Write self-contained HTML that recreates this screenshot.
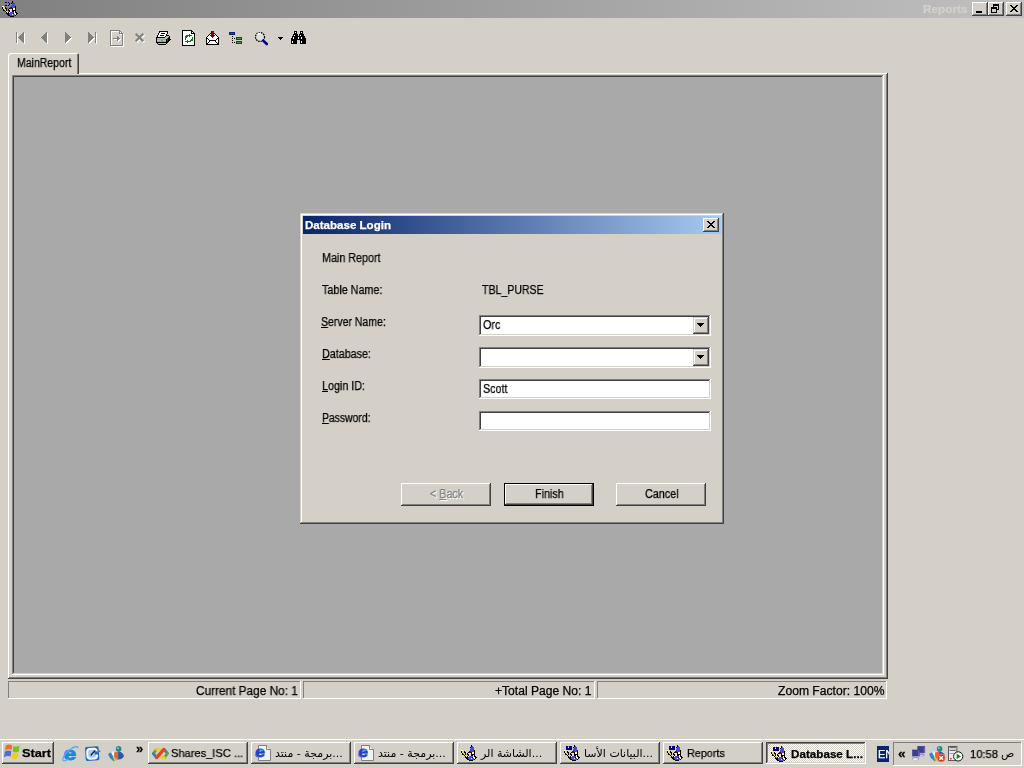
<!DOCTYPE html>
<html lang="en"><head><meta charset="utf-8"><title>Reports</title>
<style>
html,body{margin:0;padding:0}
body{width:1024px;height:768px;overflow:hidden;background:#d4d0c8;position:relative;font-family:"Liberation Sans","DejaVu Sans",sans-serif;font-size:11px;color:#000}
div,span,svg{position:absolute;box-sizing:border-box}
.t{white-space:nowrap;transform-origin:0 50%;display:block;will-change:transform;-webkit-text-stroke:0.25px}
.t u{text-decoration:underline;text-underline-offset:1px}
.ic{overflow:visible}
.btn{background:#d4d0c8;box-shadow:inset -1px -1px 0 #404040,inset 1px 1px 0 #fff,inset -2px -2px 0 #808080}
.sunk{background:#fff;box-shadow:inset -1px -1px 0 #fff,inset 1px 1px 0 #808080,inset -2px -2px 0 #d4d0c8,inset 2px 2px 0 #404040}
.pane{box-shadow:inset -1px -1px 0 #fff,inset 1px 1px 0 #808080}
.tb{background:#d4d0c8;box-shadow:inset -1px -1px 0 #404040,inset 1px 1px 0 #fff,inset -2px -2px 0 #808080}
</style></head><body>
<div style="left:0;top:0;width:1024px;height:18px;background:linear-gradient(to right,#808080,#c0c0c0)"></div><svg class="ic" style="left:2px;top:1px" width="16" height="16" viewBox="0 0 16 16" shape-rendering="crispEdges"><rect x="10" y="0" width="1" height="1" fill="#000000"/><rect x="3" y="1" width="2" height="1" fill="#000080"/><rect x="6" y="1" width="1" height="1" fill="#000080"/><rect x="10" y="1" width="1" height="1" fill="#000000"/><rect x="11" y="1" width="1" height="1" fill="#4848e0"/><rect x="7" y="2" width="1" height="1" fill="#000080"/><rect x="9" y="2" width="1" height="1" fill="#000000"/><rect x="10" y="2" width="3" height="1" fill="#4848e0"/><rect x="7" y="3" width="1" height="1" fill="#000080"/><rect x="9" y="3" width="1" height="1" fill="#8c8cf0"/><rect x="10" y="3" width="3" height="1" fill="#4848e0"/><rect x="3" y="4" width="2" height="1" fill="#000080"/><rect x="6" y="4" width="1" height="1" fill="#000080"/><rect x="9" y="4" width="4" height="1" fill="#4848e0"/><rect x="0" y="5" width="2" height="1" fill="#ffffa0"/><rect x="9" y="5" width="4" height="1" fill="#4848e0"/><rect x="13" y="5" width="1" height="1" fill="#000000"/><rect x="0" y="6" width="1" height="1" fill="#000000"/><rect x="1" y="6" width="2" height="1" fill="#e6e04a"/><rect x="3" y="6" width="1" height="1" fill="#000000"/><rect x="8" y="6" width="2" height="1" fill="#501010"/><rect x="10" y="6" width="3" height="1" fill="#4848e0"/><rect x="13" y="6" width="1" height="1" fill="#000000"/><rect x="0" y="7" width="1" height="1" fill="#000000"/><rect x="1" y="7" width="2" height="1" fill="#e6e04a"/><rect x="3" y="7" width="2" height="1" fill="#000000"/><rect x="7" y="7" width="1" height="1" fill="#000000"/><rect x="8" y="7" width="2" height="1" fill="#501010"/><rect x="10" y="7" width="1" height="1" fill="#000000"/><rect x="11" y="7" width="2" height="1" fill="#ffffa0"/><rect x="13" y="7" width="1" height="1" fill="#000000"/><rect x="1" y="8" width="1" height="1" fill="#000000"/><rect x="2" y="8" width="2" height="1" fill="#e6e04a"/><rect x="4" y="8" width="1" height="1" fill="#000000"/><rect x="6" y="8" width="1" height="1" fill="#000000"/><rect x="7" y="8" width="3" height="1" fill="#ffd8c0"/><rect x="10" y="8" width="1" height="1" fill="#000000"/><rect x="11" y="8" width="2" height="1" fill="#ffffa0"/><rect x="13" y="8" width="1" height="1" fill="#000000"/><rect x="1" y="9" width="2" height="1" fill="#000000"/><rect x="3" y="9" width="1" height="1" fill="#e6e04a"/><rect x="4" y="9" width="1" height="1" fill="#000000"/><rect x="6" y="9" width="2" height="1" fill="#000000"/><rect x="8" y="9" width="2" height="1" fill="#ffd8c0"/><rect x="10" y="9" width="4" height="1" fill="#000000"/><rect x="3" y="10" width="1" height="1" fill="#000000"/><rect x="4" y="10" width="2" height="1" fill="#e6e04a"/><rect x="7" y="10" width="1" height="1" fill="#000000"/><rect x="8" y="10" width="2" height="1" fill="#ffd8c0"/><rect x="10" y="10" width="2" height="1" fill="#000000"/><rect x="12" y="10" width="1" height="1" fill="#ffffff"/><rect x="13" y="10" width="1" height="1" fill="#000000"/><rect x="4" y="11" width="1" height="1" fill="#000000"/><rect x="5" y="11" width="1" height="1" fill="#e6e04a"/><rect x="6" y="11" width="1" height="1" fill="#000000"/><rect x="7" y="11" width="1" height="1" fill="#ffffff"/><rect x="8" y="11" width="4" height="1" fill="#4848e0"/><rect x="12" y="11" width="1" height="1" fill="#ffffff"/><rect x="13" y="11" width="2" height="1" fill="#000000"/><rect x="4" y="12" width="3" height="1" fill="#000000"/><rect x="7" y="12" width="4" height="1" fill="#4848e0"/><rect x="11" y="12" width="1" height="1" fill="#000000"/><rect x="12" y="12" width="2" height="1" fill="#ffffff"/><rect x="14" y="12" width="2" height="1" fill="#000000"/><rect x="5" y="13" width="2" height="1" fill="#000000"/><rect x="7" y="13" width="3" height="1" fill="#4848e0"/><rect x="10" y="13" width="1" height="1" fill="#ffffff"/><rect x="11" y="13" width="2" height="1" fill="#4848e0"/><rect x="13" y="13" width="1" height="1" fill="#ffffff"/><rect x="14" y="13" width="1" height="1" fill="#000000"/><rect x="6" y="14" width="2" height="1" fill="#000000"/><rect x="8" y="14" width="5" height="1" fill="#4848e0"/><rect x="13" y="14" width="1" height="1" fill="#000000"/><rect x="8" y="15" width="4" height="1" fill="#000000"/></svg><span class="t " style="left:922.5px;top:-0.81px;font-size:11px;line-height:20px;color:#d4d0c8;transform:scaleX(1.07);font-weight:bold;">Reports</span><div class="btn" style="left:972px;top:2px;width:16px;height:14px"><div style="left:4px;top:9px;width:6px;height:2px;background:#000"></div></div><div class="btn" style="left:988px;top:2px;width:16px;height:14px"><div style="left:5px;top:2px;width:6px;height:6px;border:1px solid #000;border-top-width:2px"></div><div style="left:3px;top:5px;width:6px;height:6px;border:1px solid #000;border-top-width:2px;background:#d4d0c8"></div></div><div class="btn" style="left:1006px;top:2px;width:16px;height:14px"><svg style="left:4px;top:3px" width="8" height="7" viewBox="0 0 8 7" shape-rendering="crispEdges"><path d="M0 0h2v1h1v1h2v-1h1v-1h2v1h-1v1h-1v1h-1v1h1v1h1v1h1v1h-2v-1h-1v-1h-2v1h-1v1h-2v-1h1v-1h1v-1h1v-1h-1v-1h-1v-1h-1z" fill="#000"/></svg></div><svg class="ic" style="left:0px;top:0px" width="110" height="60" viewBox="0 0 110 60" shape-rendering="crispEdges"><g transform="translate(1,1)"><rect x="16" y="32" width="1" height="11" fill="#ffffff"/></g><rect x="16" y="32" width="1" height="11" fill="#808080"/><g transform="translate(1,1)"><rect x="18" y="37" width="1" height="1" fill="#ffffff"/><rect x="19" y="36" width="1" height="3" fill="#ffffff"/><rect x="20" y="35" width="1" height="5" fill="#ffffff"/><rect x="21" y="34" width="1" height="7" fill="#ffffff"/><rect x="22" y="33" width="1" height="9" fill="#ffffff"/><rect x="23" y="32" width="1" height="11" fill="#ffffff"/></g><rect x="18" y="37" width="1" height="1" fill="#808080"/><rect x="19" y="36" width="1" height="3" fill="#808080"/><rect x="20" y="35" width="1" height="5" fill="#808080"/><rect x="21" y="34" width="1" height="7" fill="#808080"/><rect x="22" y="33" width="1" height="9" fill="#808080"/><rect x="23" y="32" width="1" height="11" fill="#808080"/><g transform="translate(1,1)"><rect x="41" y="37" width="1" height="1" fill="#ffffff"/><rect x="42" y="36" width="1" height="3" fill="#ffffff"/><rect x="43" y="35" width="1" height="5" fill="#ffffff"/><rect x="44" y="34" width="1" height="7" fill="#ffffff"/><rect x="45" y="33" width="1" height="9" fill="#ffffff"/><rect x="46" y="32" width="1" height="11" fill="#ffffff"/></g><rect x="41" y="37" width="1" height="1" fill="#808080"/><rect x="42" y="36" width="1" height="3" fill="#808080"/><rect x="43" y="35" width="1" height="5" fill="#808080"/><rect x="44" y="34" width="1" height="7" fill="#808080"/><rect x="45" y="33" width="1" height="9" fill="#808080"/><rect x="46" y="32" width="1" height="11" fill="#808080"/><g transform="translate(1,1)"><rect x="65" y="32" width="1" height="11" fill="#ffffff"/><rect x="66" y="33" width="1" height="9" fill="#ffffff"/><rect x="67" y="34" width="1" height="7" fill="#ffffff"/><rect x="68" y="35" width="1" height="5" fill="#ffffff"/><rect x="69" y="36" width="1" height="3" fill="#ffffff"/><rect x="70" y="37" width="1" height="1" fill="#ffffff"/></g><rect x="65" y="32" width="1" height="11" fill="#808080"/><rect x="66" y="33" width="1" height="9" fill="#808080"/><rect x="67" y="34" width="1" height="7" fill="#808080"/><rect x="68" y="35" width="1" height="5" fill="#808080"/><rect x="69" y="36" width="1" height="3" fill="#808080"/><rect x="70" y="37" width="1" height="1" fill="#808080"/><g transform="translate(1,1)"><rect x="88" y="32" width="1" height="11" fill="#ffffff"/><rect x="89" y="33" width="1" height="9" fill="#ffffff"/><rect x="90" y="34" width="1" height="7" fill="#ffffff"/><rect x="91" y="35" width="1" height="5" fill="#ffffff"/><rect x="92" y="36" width="1" height="3" fill="#ffffff"/><rect x="93" y="37" width="1" height="1" fill="#ffffff"/></g><rect x="88" y="32" width="1" height="11" fill="#808080"/><rect x="89" y="33" width="1" height="9" fill="#808080"/><rect x="90" y="34" width="1" height="7" fill="#808080"/><rect x="91" y="35" width="1" height="5" fill="#808080"/><rect x="92" y="36" width="1" height="3" fill="#808080"/><rect x="93" y="37" width="1" height="1" fill="#808080"/><g transform="translate(1,1)"><rect x="95" y="32" width="1" height="11" fill="#ffffff"/></g><rect x="95" y="32" width="1" height="11" fill="#808080"/></svg><svg class="ic" style="left:0px;top:0px" width="130" height="60" viewBox="0 0 130 60" shape-rendering="crispEdges"><g transform="translate(1,1)"><path d="M110.5 30.5h9l3 3v12h-12z M119.5 30.5v3h3" fill="none" stroke="#fff"/><rect x="113" y="38" width="6" height="1" fill="#fff"/><rect x="117" y="36" width="1" height="5" fill="#fff"/><rect x="118" y="37" width="1" height="3" fill="#fff"/><rect x="119" y="38" width="1" height="1" fill="#fff"/></g><path d="M110.5 30.5h9l3 3v12h-12z M119.5 30.5v3h3" fill="none" stroke="#808080"/><rect x="113" y="38" width="6" height="1" fill="#808080"/><rect x="117" y="36" width="1" height="5" fill="#808080"/><rect x="118" y="37" width="1" height="3" fill="#808080"/><rect x="119" y="38" width="1" height="1" fill="#808080"/></svg><svg class="ic" style="left:0px;top:0px" width="150" height="60" viewBox="0 0 150 60"><g transform="translate(1,1)"><path d="M135.7 33.7l7.6 7.6M143.3 33.7l-7.6 7.6" stroke="#fff" stroke-width="2.2" fill="none"/></g><path d="M135.7 33.7l7.6 7.6M143.3 33.7l-7.6 7.6" stroke="#808080" stroke-width="2.2" fill="none"/></svg><svg class="ic" style="left:156px;top:31px" width="15" height="14" viewBox="0 0 15 14" shape-rendering="crispEdges"><rect x="3" y="0" width="9" height="1" fill="#000000"/><rect x="3" y="1" width="1" height="1" fill="#000000"/><rect x="4" y="1" width="7" height="1" fill="#ffffff"/><rect x="11" y="1" width="1" height="1" fill="#000000"/><rect x="2" y="2" width="1" height="1" fill="#000000"/><rect x="3" y="2" width="2" height="1" fill="#ffffff"/><rect x="5" y="2" width="4" height="1" fill="#000000"/><rect x="9" y="2" width="2" height="1" fill="#ffffff"/><rect x="11" y="2" width="1" height="1" fill="#000000"/><rect x="2" y="3" width="1" height="1" fill="#000000"/><rect x="3" y="3" width="7" height="1" fill="#ffffff"/><rect x="10" y="3" width="1" height="1" fill="#000000"/><rect x="1" y="4" width="1" height="1" fill="#000000"/><rect x="2" y="4" width="2" height="1" fill="#ffffff"/><rect x="4" y="4" width="4" height="1" fill="#000000"/><rect x="8" y="4" width="2" height="1" fill="#ffffff"/><rect x="10" y="4" width="3" height="1" fill="#000000"/><rect x="1" y="5" width="1" height="1" fill="#000000"/><rect x="2" y="5" width="7" height="1" fill="#ffffff"/><rect x="9" y="5" width="1" height="1" fill="#000000"/><rect x="10" y="5" width="3" height="1" fill="#c0c0c0"/><rect x="13" y="5" width="1" height="1" fill="#000000"/><rect x="0" y="6" width="9" height="1" fill="#000000"/><rect x="9" y="6" width="3" height="1" fill="#c0c0c0"/><rect x="12" y="6" width="1" height="1" fill="#404040"/><rect x="13" y="6" width="1" height="1" fill="#000000"/><rect x="0" y="7" width="1" height="1" fill="#000000"/><rect x="1" y="7" width="10" height="1" fill="#c0c0c0"/><rect x="11" y="7" width="1" height="1" fill="#404040"/><rect x="12" y="7" width="2" height="1" fill="#000000"/><rect x="0" y="8" width="1" height="1" fill="#000000"/><rect x="1" y="8" width="9" height="1" fill="#a0a0a0"/><rect x="10" y="8" width="1" height="1" fill="#000000"/><rect x="11" y="8" width="1" height="1" fill="#404040"/><rect x="12" y="8" width="3" height="1" fill="#000000"/><rect x="0" y="9" width="1" height="1" fill="#000000"/><rect x="1" y="9" width="4" height="1" fill="#c0c0c0"/><rect x="5" y="9" width="2" height="1" fill="#40c040"/><rect x="7" y="9" width="3" height="1" fill="#c0c0c0"/><rect x="10" y="9" width="1" height="1" fill="#000000"/><rect x="11" y="9" width="1" height="1" fill="#404040"/><rect x="12" y="9" width="2" height="1" fill="#000000"/><rect x="0" y="10" width="1" height="1" fill="#000000"/><rect x="1" y="10" width="9" height="1" fill="#a0a0a0"/><rect x="10" y="10" width="3" height="1" fill="#000000"/><rect x="0" y="11" width="12" height="1" fill="#000000"/><rect x="1" y="12" width="1" height="1" fill="#000000"/><rect x="2" y="12" width="8" height="1" fill="#c0c0c0"/><rect x="10" y="12" width="1" height="1" fill="#000000"/><rect x="2" y="13" width="8" height="1" fill="#000000"/></svg><svg class="ic" style="left:182px;top:30px" width="14" height="16" viewBox="0 0 14 16" shape-rendering="crispEdges"><rect x="0" y="0" width="10" height="1" fill="#000000"/><rect x="0" y="1" width="1" height="1" fill="#000000"/><rect x="1" y="1" width="8" height="1" fill="#ffffff"/><rect x="9" y="1" width="2" height="1" fill="#000000"/><rect x="0" y="2" width="1" height="1" fill="#000000"/><rect x="1" y="2" width="8" height="1" fill="#ffffff"/><rect x="9" y="2" width="1" height="1" fill="#000000"/><rect x="10" y="2" width="1" height="1" fill="#ffffff"/><rect x="11" y="2" width="1" height="1" fill="#000000"/><rect x="0" y="3" width="1" height="1" fill="#000000"/><rect x="1" y="3" width="8" height="1" fill="#ffffff"/><rect x="9" y="3" width="4" height="1" fill="#000000"/><rect x="0" y="4" width="1" height="1" fill="#000000"/><rect x="1" y="4" width="6" height="1" fill="#ffffff"/><rect x="7" y="4" width="1" height="1" fill="#008000"/><rect x="8" y="4" width="4" height="1" fill="#ffffff"/><rect x="12" y="4" width="1" height="1" fill="#000000"/><rect x="0" y="5" width="1" height="1" fill="#000000"/><rect x="1" y="5" width="3" height="1" fill="#ffffff"/><rect x="4" y="5" width="6" height="1" fill="#008000"/><rect x="10" y="5" width="2" height="1" fill="#ffffff"/><rect x="12" y="5" width="1" height="1" fill="#000000"/><rect x="0" y="6" width="1" height="1" fill="#000000"/><rect x="1" y="6" width="2" height="1" fill="#ffffff"/><rect x="3" y="6" width="3" height="1" fill="#008000"/><rect x="6" y="6" width="1" height="1" fill="#ffffff"/><rect x="7" y="6" width="1" height="1" fill="#008000"/><rect x="8" y="6" width="4" height="1" fill="#ffffff"/><rect x="12" y="6" width="1" height="1" fill="#000000"/><rect x="0" y="7" width="1" height="1" fill="#000000"/><rect x="1" y="7" width="2" height="1" fill="#ffffff"/><rect x="3" y="7" width="2" height="1" fill="#008000"/><rect x="5" y="7" width="5" height="1" fill="#ffffff"/><rect x="10" y="7" width="1" height="1" fill="#008000"/><rect x="11" y="7" width="1" height="1" fill="#ffffff"/><rect x="12" y="7" width="1" height="1" fill="#000000"/><rect x="0" y="8" width="1" height="1" fill="#000000"/><rect x="1" y="8" width="2" height="1" fill="#ffffff"/><rect x="3" y="8" width="1" height="1" fill="#008000"/><rect x="4" y="8" width="6" height="1" fill="#ffffff"/><rect x="10" y="8" width="1" height="1" fill="#008000"/><rect x="11" y="8" width="1" height="1" fill="#ffffff"/><rect x="12" y="8" width="1" height="1" fill="#000000"/><rect x="0" y="9" width="1" height="1" fill="#000000"/><rect x="1" y="9" width="2" height="1" fill="#ffffff"/><rect x="3" y="9" width="1" height="1" fill="#008000"/><rect x="4" y="9" width="5" height="1" fill="#ffffff"/><rect x="9" y="9" width="2" height="1" fill="#008000"/><rect x="11" y="9" width="1" height="1" fill="#ffffff"/><rect x="12" y="9" width="1" height="1" fill="#000000"/><rect x="0" y="10" width="1" height="1" fill="#000000"/><rect x="1" y="10" width="4" height="1" fill="#ffffff"/><rect x="5" y="10" width="1" height="1" fill="#008000"/><rect x="6" y="10" width="2" height="1" fill="#ffffff"/><rect x="8" y="10" width="3" height="1" fill="#008000"/><rect x="11" y="10" width="1" height="1" fill="#ffffff"/><rect x="12" y="10" width="1" height="1" fill="#000000"/><rect x="0" y="11" width="1" height="1" fill="#000000"/><rect x="1" y="11" width="2" height="1" fill="#ffffff"/><rect x="3" y="11" width="6" height="1" fill="#008000"/><rect x="9" y="11" width="3" height="1" fill="#ffffff"/><rect x="12" y="11" width="1" height="1" fill="#000000"/><rect x="0" y="12" width="1" height="1" fill="#000000"/><rect x="1" y="12" width="4" height="1" fill="#ffffff"/><rect x="5" y="12" width="1" height="1" fill="#008000"/><rect x="6" y="12" width="6" height="1" fill="#ffffff"/><rect x="12" y="12" width="1" height="1" fill="#000000"/><rect x="0" y="13" width="1" height="1" fill="#000000"/><rect x="1" y="13" width="11" height="1" fill="#ffffff"/><rect x="12" y="13" width="1" height="1" fill="#000000"/><rect x="0" y="14" width="1" height="1" fill="#000000"/><rect x="1" y="14" width="11" height="1" fill="#ffffff"/><rect x="12" y="14" width="1" height="1" fill="#000000"/><rect x="0" y="15" width="13" height="1" fill="#000000"/></svg><svg class="ic" style="left:206px;top:31px" width="13" height="14" viewBox="0 0 13 14" shape-rendering="crispEdges"><rect x="5" y="0" width="3" height="1" fill="#800000"/><rect x="5" y="1" width="3" height="1" fill="#800000"/><rect x="4" y="2" width="1" height="1" fill="#000000"/><rect x="5" y="2" width="3" height="1" fill="#800000"/><rect x="8" y="2" width="1" height="1" fill="#000000"/><rect x="3" y="3" width="1" height="1" fill="#000000"/><rect x="4" y="3" width="1" height="1" fill="#ffffff"/><rect x="5" y="3" width="3" height="1" fill="#800000"/><rect x="8" y="3" width="1" height="1" fill="#ffffff"/><rect x="9" y="3" width="1" height="1" fill="#000000"/><rect x="2" y="4" width="1" height="1" fill="#000000"/><rect x="3" y="4" width="1" height="1" fill="#ffffff"/><rect x="4" y="4" width="5" height="1" fill="#800000"/><rect x="9" y="4" width="1" height="1" fill="#ffffff"/><rect x="10" y="4" width="1" height="1" fill="#000000"/><rect x="1" y="5" width="1" height="1" fill="#000000"/><rect x="2" y="5" width="3" height="1" fill="#ffffff"/><rect x="5" y="5" width="3" height="1" fill="#800000"/><rect x="8" y="5" width="3" height="1" fill="#ffffff"/><rect x="11" y="5" width="1" height="1" fill="#000000"/><rect x="0" y="6" width="1" height="1" fill="#000000"/><rect x="1" y="6" width="5" height="1" fill="#ffffff"/><rect x="6" y="6" width="1" height="1" fill="#800000"/><rect x="7" y="6" width="5" height="1" fill="#ffffff"/><rect x="12" y="6" width="1" height="1" fill="#000000"/><rect x="0" y="7" width="2" height="1" fill="#000000"/><rect x="2" y="7" width="9" height="1" fill="#ffffff"/><rect x="11" y="7" width="2" height="1" fill="#000000"/><rect x="0" y="8" width="1" height="1" fill="#000000"/><rect x="1" y="8" width="1" height="1" fill="#ffffff"/><rect x="2" y="8" width="1" height="1" fill="#000000"/><rect x="3" y="8" width="7" height="1" fill="#ffffff"/><rect x="10" y="8" width="1" height="1" fill="#000000"/><rect x="11" y="8" width="1" height="1" fill="#ffffff"/><rect x="12" y="8" width="1" height="1" fill="#000000"/><rect x="0" y="9" width="1" height="1" fill="#000000"/><rect x="1" y="9" width="2" height="1" fill="#ffffff"/><rect x="3" y="9" width="7" height="1" fill="#000000"/><rect x="10" y="9" width="2" height="1" fill="#ffffff"/><rect x="12" y="9" width="1" height="1" fill="#000000"/><rect x="0" y="10" width="1" height="1" fill="#000000"/><rect x="1" y="10" width="2" height="1" fill="#ffffff"/><rect x="3" y="10" width="1" height="1" fill="#000000"/><rect x="4" y="10" width="5" height="1" fill="#ffffff"/><rect x="9" y="10" width="1" height="1" fill="#000000"/><rect x="10" y="10" width="2" height="1" fill="#ffffff"/><rect x="12" y="10" width="1" height="1" fill="#000000"/><rect x="0" y="11" width="1" height="1" fill="#000000"/><rect x="1" y="11" width="1" height="1" fill="#ffffff"/><rect x="2" y="11" width="1" height="1" fill="#000000"/><rect x="3" y="11" width="7" height="1" fill="#ffffff"/><rect x="10" y="11" width="1" height="1" fill="#000000"/><rect x="11" y="11" width="1" height="1" fill="#ffffff"/><rect x="12" y="11" width="1" height="1" fill="#000000"/><rect x="0" y="12" width="2" height="1" fill="#000000"/><rect x="2" y="12" width="9" height="1" fill="#ffffff"/><rect x="11" y="12" width="2" height="1" fill="#000000"/><rect x="0" y="13" width="13" height="1" fill="#000000"/></svg><svg class="ic" style="left:229px;top:32px" width="13" height="12" viewBox="0 0 13 12" shape-rendering="crispEdges"><rect x="0" y="0" width="6" height="1" fill="#0a246a"/><rect x="0" y="1" width="1" height="1" fill="#0a246a"/><rect x="1" y="1" width="4" height="1" fill="#2a3cb0"/><rect x="5" y="1" width="1" height="1" fill="#0a246a"/><rect x="0" y="2" width="6" height="1" fill="#0a246a"/><rect x="3" y="4" width="1" height="1" fill="#000000"/><rect x="7" y="5" width="6" height="1" fill="#204020"/><rect x="3" y="6" width="1" height="1" fill="#000000"/><rect x="5" y="6" width="1" height="1" fill="#000000"/><rect x="7" y="6" width="1" height="1" fill="#204020"/><rect x="8" y="6" width="4" height="1" fill="#4c9c4c"/><rect x="12" y="6" width="1" height="1" fill="#204020"/><rect x="7" y="7" width="6" height="1" fill="#204020"/><rect x="3" y="8" width="1" height="1" fill="#000000"/><rect x="7" y="9" width="6" height="1" fill="#204020"/><rect x="3" y="10" width="1" height="1" fill="#000000"/><rect x="5" y="10" width="1" height="1" fill="#000000"/><rect x="7" y="10" width="1" height="1" fill="#204020"/><rect x="8" y="10" width="4" height="1" fill="#4c9c4c"/><rect x="12" y="10" width="1" height="1" fill="#204020"/><rect x="7" y="11" width="6" height="1" fill="#204020"/></svg><svg class="ic" style="left:0px;top:0px" width="280" height="60" viewBox="0 0 280 60"><circle cx="260" cy="37" r="4.5" fill="#e0e0e0" stroke="#000" stroke-width="1.25" stroke-dasharray="1.6 0.8"/><path d="M257.5 34.5a3 3 0 0 1 3 -1" stroke="#fff" stroke-width="1.5" fill="none"/><path d="M263.2 40.6l3.6 3.4" stroke="#000080" stroke-width="2.6" stroke-linecap="round"/></svg><svg class="ic" style="left:278px;top:37px" width="5" height="3" viewBox="0 0 5 3" shape-rendering="crispEdges"><rect x="0" y="0" width="5" height="1"/><rect x="1" y="1" width="3" height="1"/><rect x="2" y="2" width="1" height="1"/></svg><svg class="ic" style="left:291px;top:31px" width="15" height="13" viewBox="0 0 15 13" shape-rendering="crispEdges"><rect x="3" y="0" width="3" height="1" fill="#000000"/><rect x="9" y="0" width="3" height="1" fill="#000000"/><rect x="3" y="1" width="1" height="1" fill="#000000"/><rect x="4" y="1" width="1" height="1" fill="#ffffff"/><rect x="5" y="1" width="1" height="1" fill="#000000"/><rect x="9" y="1" width="1" height="1" fill="#000000"/><rect x="10" y="1" width="1" height="1" fill="#ffffff"/><rect x="11" y="1" width="1" height="1" fill="#000000"/><rect x="3" y="2" width="3" height="1" fill="#000000"/><rect x="9" y="2" width="3" height="1" fill="#000000"/><rect x="2" y="3" width="5" height="1" fill="#000000"/><rect x="8" y="3" width="5" height="1" fill="#000000"/><rect x="2" y="4" width="1" height="1" fill="#000000"/><rect x="3" y="4" width="1" height="1" fill="#ffffff"/><rect x="4" y="4" width="3" height="1" fill="#000000"/><rect x="8" y="4" width="1" height="1" fill="#000000"/><rect x="9" y="4" width="1" height="1" fill="#ffffff"/><rect x="10" y="4" width="3" height="1" fill="#000000"/><rect x="1" y="5" width="13" height="1" fill="#000000"/><rect x="1" y="6" width="1" height="1" fill="#000000"/><rect x="2" y="6" width="1" height="1" fill="#ffffff"/><rect x="3" y="6" width="4" height="1" fill="#000000"/><rect x="7" y="6" width="1" height="1" fill="#ffffff"/><rect x="8" y="6" width="2" height="1" fill="#000000"/><rect x="10" y="6" width="1" height="1" fill="#ffffff"/><rect x="11" y="6" width="3" height="1" fill="#000000"/><rect x="0" y="7" width="2" height="1" fill="#000000"/><rect x="2" y="7" width="1" height="1" fill="#ffffff"/><rect x="3" y="7" width="4" height="1" fill="#000000"/><rect x="7" y="7" width="1" height="1" fill="#ffffff"/><rect x="8" y="7" width="2" height="1" fill="#000000"/><rect x="10" y="7" width="1" height="1" fill="#ffffff"/><rect x="11" y="7" width="4" height="1" fill="#000000"/><rect x="0" y="8" width="15" height="1" fill="#000000"/><rect x="0" y="9" width="6" height="1" fill="#000000"/><rect x="9" y="9" width="6" height="1" fill="#000000"/><rect x="0" y="10" width="1" height="1" fill="#000000"/><rect x="1" y="10" width="1" height="1" fill="#ffffff"/><rect x="2" y="10" width="4" height="1" fill="#000000"/><rect x="9" y="10" width="1" height="1" fill="#000000"/><rect x="10" y="10" width="1" height="1" fill="#ffffff"/><rect x="11" y="10" width="4" height="1" fill="#000000"/><rect x="0" y="11" width="1" height="1" fill="#000000"/><rect x="1" y="11" width="1" height="1" fill="#ffffff"/><rect x="2" y="11" width="4" height="1" fill="#000000"/><rect x="9" y="11" width="1" height="1" fill="#000000"/><rect x="10" y="11" width="1" height="1" fill="#ffffff"/><rect x="11" y="11" width="4" height="1" fill="#000000"/><rect x="0" y="12" width="6" height="1" fill="#000000"/><rect x="9" y="12" width="6" height="1" fill="#000000"/></svg><div style="left:8px;top:73px;width:880px;height:606px;background:#d4d0c8;box-shadow:inset -1px -1px 0 #404040,inset 1px 1px 0 #fff,inset -2px -2px 0 #808080"></div><div style="left:8px;top:53px;width:71px;height:21px;background:#d4d0c8;border-top-left-radius:3px;border-top-right-radius:2px;box-shadow:inset 1px 1px 0 #fff,inset -1px 0 0 #404040,inset -2px 0 0 #808080"></div><div style="left:9px;top:73px;width:68px;height:2px;background:#d4d0c8"></div><span class="t " style="left:17px;top:52.67px;font-size:12.5px;line-height:20px;color:#000;transform:scaleX(0.84);">MainReport</span><div style="left:12px;top:75px;width:872px;height:600px;background:#a9a9a9;box-shadow:inset -1px -1px 0 #fff,inset 1px 1px 0 #808080,inset -2px -2px 0 #d4d0c8,inset 2px 2px 0 #404040"></div><div class="pane" style="left:8px;top:681px;width:293px;height:18px"></div><div class="pane" style="left:303px;top:681px;width:292px;height:18px"></div><div class="pane" style="left:597px;top:681px;width:290px;height:18px"></div><span class="t " style="left:195.5px;top:680.84px;font-size:12px;line-height:20px;color:#000;transform:scaleX(0.985);">Current Page No: 1</span><span class="t " style="left:495px;top:680.84px;font-size:12px;line-height:20px;color:#000;transform:scaleX(1.008);">+Total Page No: 1</span><span class="t " style="left:778.3px;top:680.84px;font-size:12px;line-height:20px;color:#000;transform:scaleX(1.01);">Zoom Factor: 100%</span><div style="left:300px;top:213px;width:424px;height:311px;background:#d4d0c8;box-shadow:inset -1px -1px 0 #404040,inset 1px 1px 0 #d4d0c8,inset -2px -2px 0 #808080,inset 2px 2px 0 #fff"></div><div style="left:303px;top:216px;width:418px;height:18px;background:linear-gradient(to right,#0a246a,#a6caf0)"></div><span class="t " style="left:304.5px;top:215.19px;font-size:11px;line-height:20px;color:#fff;transform:scaleX(1.05);font-weight:bold;">Database Login</span><div class="btn" style="left:703px;top:218px;width:16px;height:14px"><svg style="left:4px;top:3px" width="8" height="7" viewBox="0 0 8 7" shape-rendering="crispEdges"><path d="M0 0h2v1h1v1h2v-1h1v-1h2v1h-1v1h-1v1h-1v1h1v1h1v1h1v1h-2v-1h-1v-1h-2v1h-1v1h-2v-1h1v-1h1v-1h1v-1h-1v-1h-1v-1h-1z" fill="#000"/></svg></div><span class="t " style="left:321.5px;top:247.67px;font-size:12.5px;line-height:20px;color:#000;transform:scaleX(0.86);">Main Report</span><span class="t " style="left:321.5px;top:279.67px;font-size:12.5px;line-height:20px;color:#000;transform:scaleX(0.86);">Table Name:</span><span class="t " style="left:481.6px;top:279.67px;font-size:12.5px;line-height:20px;color:#000;transform:scaleX(0.845);">TBL_PURSE</span><span class="t " style="left:321px;top:311.67px;font-size:12.5px;line-height:20px;color:#000;transform:scaleX(0.84);"><u>S</u>erver Name:</span><span class="t " style="left:321.5px;top:343.67px;font-size:12.5px;line-height:20px;color:#000;transform:scaleX(0.86);"><u>D</u>atabase:</span><span class="t " style="left:321.5px;top:375.67px;font-size:12.5px;line-height:20px;color:#000;transform:scaleX(0.86);"><u>L</u>ogin ID:</span><span class="t " style="left:321.5px;top:407.67px;font-size:12.5px;line-height:20px;color:#000;transform:scaleX(0.83);"><u>P</u>assword:</span><div class="sunk" style="left:479px;top:315px;width:232px;height:21px"></div><div class="btn" style="left:693px;top:317px;width:16px;height:17px;box-shadow:inset -1px -1px 0 #404040,inset 1px 1px 0 #d4d0c8,inset -2px -2px 0 #808080,inset 2px 2px 0 #fff"><svg style="left:4px;top:6px" width="7" height="4" viewBox="0 0 7 4" shape-rendering="crispEdges"><rect x="0" y="0" width="7" height="1"/><rect x="1" y="1" width="5" height="1"/><rect x="2" y="2" width="3" height="1"/><rect x="3" y="3" width="1" height="1"/></svg></div><span class="t " style="left:482.5px;top:314.67px;font-size:12.5px;line-height:20px;color:#000;transform:scaleX(0.86);">Orc</span><div class="sunk" style="left:479px;top:347px;width:232px;height:21px"></div><div class="btn" style="left:693px;top:349px;width:16px;height:17px;box-shadow:inset -1px -1px 0 #404040,inset 1px 1px 0 #d4d0c8,inset -2px -2px 0 #808080,inset 2px 2px 0 #fff"><svg style="left:4px;top:6px" width="7" height="4" viewBox="0 0 7 4" shape-rendering="crispEdges"><rect x="0" y="0" width="7" height="1"/><rect x="1" y="1" width="5" height="1"/><rect x="2" y="2" width="3" height="1"/><rect x="3" y="3" width="1" height="1"/></svg></div><div class="sunk" style="left:479px;top:379px;width:232px;height:20px"></div><span class="t " style="left:482.5px;top:378.67px;font-size:12.5px;line-height:20px;color:#000;transform:scaleX(0.86);">Scott</span><div class="sunk" style="left:479px;top:411px;width:232px;height:20px"></div><div class="btn" style="left:401px;top:483px;width:90px;height:23px"></div><span class="t " style="left:431px;top:484.67px;font-size:12.5px;line-height:20px;color:#fff;transform:scaleX(0.86);">&lt; <u>B</u>ack</span><span class="t " style="left:430px;top:483.67px;font-size:12.5px;line-height:20px;color:#808080;transform:scaleX(0.86);">&lt; <u>B</u>ack</span><div style="left:504px;top:483px;width:90px;height:23px;background:#000"></div><div class="btn" style="left:505px;top:484px;width:88px;height:21px"></div><span class="t " style="left:535px;top:483.67px;font-size:12.5px;line-height:20px;color:#000;transform:scaleX(0.86);">Finish</span><div class="btn" style="left:616px;top:483px;width:90px;height:23px"></div><span class="t " style="left:644.5px;top:483.67px;font-size:12.5px;line-height:20px;color:#000;transform:scaleX(0.86);">Cancel</span><div style="left:0;top:739px;width:1024px;height:1px;background:#fff"></div><div class="tb" style="left:2px;top:742px;width:52px;height:22px"></div><svg class="ic" style="left:4px;top:744px" width="16" height="16" viewBox="0 0 16 16"><path d="M1.8 1.6 C3.6 0.2 6 0.2 8.4 1.4 L7.6 6 C5.6 5 3.2 5 1.0 6.4 Z" fill="#f0701c"/><path d="M9.4 2.0 C11.4 3 13.6 2.8 15.6 1.6 L14.8 7.4 C12.8 8.6 10.6 8.8 8.6 7.6 Z" fill="#74c416"/><path d="M0.8 7.6 C2.8 6.2 5.2 6.2 7.4 7.2 L6.6 12.6 C4.4 11.6 2.2 11.8 0 13.2 Z" fill="#4a70d8"/><path d="M8.4 8.8 C10.4 10 12.6 9.8 14.6 8.6 L13.8 14 C11.8 15.2 9.6 15.2 7.6 14 Z" fill="#f4cc14"/></svg><span class="t " style="left:22px;top:743.19px;font-size:11px;line-height:20px;color:#000;transform:scaleX(1.16);font-weight:bold;">Start</span><svg class="ic" style="left:62px;top:746px" width="16" height="16" viewBox="0 0 16 16"><path d="M15.6 2.2c0.6-2.6-3-1.8-6 0.2" fill="none" stroke="#4aa8f0" stroke-width="1.3"/><text x="1.6" y="14.2" font-family="Liberation Sans,sans-serif" font-weight="bold" font-size="19" fill="#1e86e0" stroke="#1e86e0" stroke-width="0.9" textLength="12.6" lengthAdjust="spacingAndGlyphs">e</text><path d="M9.6 2.4C6 4.4 1.4 9.6 0.8 13c-0.4 2.6 2.6 2 5.6 0.2" fill="none" stroke="#58b0f4" stroke-width="1.3"/></svg><svg class="ic" style="left:85px;top:746px" width="16" height="16" viewBox="0 0 16 16"><rect x="0.4" y="0.6" width="13.6" height="14" rx="1.6" fill="#2468c0" transform="rotate(-4 7 8)"/><rect x="2.3" y="2.8" width="9.6" height="9.8" rx="3" fill="#a8c8f0" stroke="#f4f8ff" stroke-width="2" transform="rotate(-4 7 8)"/><rect x="9.6" y="5.6" width="3.4" height="3.2" fill="#2468c0" transform="rotate(-4 7 8)"/><path d="M6 9l4.2-4.6" stroke="#101828" stroke-width="1.3"/><path d="M5.4 9.6l1.6-0.4-1-1z" fill="#000"/><circle cx="14.6" cy="5.2" r="0.9" fill="#e05030"/></svg><svg class="ic" style="left:108px;top:746px" width="17" height="16" viewBox="0 0 17 16"><circle cx="4.5" cy="3.1" r="1.8" fill="#b4d4f8"/><circle cx="10.6" cy="2.9" r="2.8" fill="#2a8488"/><circle cx="9.9" cy="2.2" r="1.1" fill="#78c4a8"/><path d="M0.1 8.2C1.5 6.5 3.2 6.3 4.2 6.6L5.8 15C3 13.5 1 11 0.1 8.2Z" fill="#2a86c8"/><path d="M3.2 5.9C4.6 5.1 5.8 5.5 6.4 6.4L6.2 10.4 4 8.8Z" fill="#f8f8f4"/><path d="M6.3 6.3L10.2 5.9V13.6L7.6 14.4 6 10Z" fill="#e8642a"/><path d="M10.1 5.8C13 5.4 15.5 7.6 16 10C15 12.4 12.8 13.6 10.1 13.6Z" fill="#2858a8"/><path d="M3.7 12.4L6.4 12.8V15.6C5 15.2 4.2 14 3.7 12.4Z" fill="#48a838"/><path d="M6.8 12.4h2v1.8h-2z" fill="#f0c020"/></svg><span class="t " style="left:135.5px;top:739.00px;font-size:13px;line-height:20px;color:#000;transform:scaleX(1.0);font-weight:bold;">»</span><div class="tb" style="left:148px;top:742px;width:100px;height:22px"></div><svg class="ic" style="left:152px;top:745.5px" width="17" height="16" viewBox="0 0 17 16"><g fill="none" stroke-width="2.7" stroke-linecap="round"><path d="M1.4 7.6L4.4 3.4" stroke="#5aa83a"/><path d="M4.4 3.4L7.6 3.2" stroke="#f4cc28"/><path d="M1.4 7.6L4.4 11.6" stroke="#3a7ac8"/><path d="M12.2 3.4L15.4 7.4" stroke="#3a7ac8"/><path d="M15.4 7.4L12.4 11.6" stroke="#5aa83a"/><path d="M12.4 11.6L9.4 11.6" stroke="#f4cc28"/><path d="M4.8 11.4L11.8 3.4" stroke="#e2481c" stroke-width="3.3"/></g></svg><span class="t " style="left:170.8px;top:742.62px;font-size:11.5px;line-height:20px;color:#000;transform:scaleX(0.965);">Shares_ISC ...</span><div class="tb" style="left:251px;top:742px;width:100px;height:22px"></div><svg class="ic" style="left:255px;top:745px" width="16" height="16" viewBox="0 0 16 16"><path d="M3.5 0.5h8l4 4v11h-12z" fill="#f2f2ee" stroke="#808080" stroke-width="1"/><path d="M11.5 0.5v4h4" fill="#f4f4f4" stroke="#808080"/><text x="0.2" y="11.8" font-family="Liberation Sans,sans-serif" font-weight="bold" font-size="15" fill="#2440c8" stroke="#2440c8" stroke-width="0.8" textLength="9.6" lengthAdjust="spacingAndGlyphs">e</text><path d="M4.6 5.2h3.6" stroke="#60c8f8" stroke-width="1"/><path d="M0.4 9.5c0.2 2.6 2 2.8 4 1.8" fill="none" stroke="#4060d8" stroke-width="1"/></svg><span class="t " style="left:274.5px;top:743.69px;font-size:11px;line-height:20px;color:#000;transform:scaleX(1.0);font-family:'DejaVu Sans','Liberation Sans',sans-serif;-webkit-text-stroke:0;">برمجة - منتد...</span><div class="tb" style="left:354px;top:742px;width:100px;height:22px"></div><svg class="ic" style="left:358px;top:745px" width="16" height="16" viewBox="0 0 16 16"><path d="M3.5 0.5h8l4 4v11h-12z" fill="#f2f2ee" stroke="#808080" stroke-width="1"/><path d="M11.5 0.5v4h4" fill="#f4f4f4" stroke="#808080"/><text x="0.2" y="11.8" font-family="Liberation Sans,sans-serif" font-weight="bold" font-size="15" fill="#2440c8" stroke="#2440c8" stroke-width="0.8" textLength="9.6" lengthAdjust="spacingAndGlyphs">e</text><path d="M4.6 5.2h3.6" stroke="#60c8f8" stroke-width="1"/><path d="M0.4 9.5c0.2 2.6 2 2.8 4 1.8" fill="none" stroke="#4060d8" stroke-width="1"/></svg><span class="t " style="left:377.5px;top:743.69px;font-size:11px;line-height:20px;color:#000;transform:scaleX(1.0);font-family:'DejaVu Sans','Liberation Sans',sans-serif;-webkit-text-stroke:0;">برمجة - منتد...</span><div class="tb" style="left:457px;top:742px;width:100px;height:22px"></div><svg class="ic" style="left:461px;top:745px" width="16" height="16" viewBox="0 0 16 16" shape-rendering="crispEdges"><rect x="10" y="0" width="1" height="1" fill="#000000"/><rect x="10" y="1" width="1" height="1" fill="#000000"/><rect x="11" y="1" width="1" height="1" fill="#4848e0"/><rect x="9" y="2" width="1" height="1" fill="#000000"/><rect x="10" y="2" width="3" height="1" fill="#4848e0"/><rect x="9" y="3" width="1" height="1" fill="#8c8cf0"/><rect x="10" y="3" width="3" height="1" fill="#4848e0"/><rect x="9" y="4" width="4" height="1" fill="#4848e0"/><rect x="0" y="5" width="2" height="1" fill="#ffffa0"/><rect x="9" y="5" width="4" height="1" fill="#4848e0"/><rect x="13" y="5" width="1" height="1" fill="#000000"/><rect x="0" y="6" width="1" height="1" fill="#000000"/><rect x="1" y="6" width="2" height="1" fill="#e6e04a"/><rect x="3" y="6" width="1" height="1" fill="#000000"/><rect x="8" y="6" width="2" height="1" fill="#501010"/><rect x="10" y="6" width="3" height="1" fill="#4848e0"/><rect x="13" y="6" width="1" height="1" fill="#000000"/><rect x="0" y="7" width="1" height="1" fill="#000000"/><rect x="1" y="7" width="2" height="1" fill="#e6e04a"/><rect x="3" y="7" width="2" height="1" fill="#000000"/><rect x="7" y="7" width="1" height="1" fill="#000000"/><rect x="8" y="7" width="2" height="1" fill="#501010"/><rect x="10" y="7" width="1" height="1" fill="#000000"/><rect x="11" y="7" width="2" height="1" fill="#ffffa0"/><rect x="13" y="7" width="1" height="1" fill="#000000"/><rect x="1" y="8" width="1" height="1" fill="#000000"/><rect x="2" y="8" width="2" height="1" fill="#e6e04a"/><rect x="4" y="8" width="1" height="1" fill="#000000"/><rect x="6" y="8" width="1" height="1" fill="#000000"/><rect x="7" y="8" width="3" height="1" fill="#ffd8c0"/><rect x="10" y="8" width="1" height="1" fill="#000000"/><rect x="11" y="8" width="2" height="1" fill="#ffffa0"/><rect x="13" y="8" width="1" height="1" fill="#000000"/><rect x="1" y="9" width="2" height="1" fill="#000000"/><rect x="3" y="9" width="1" height="1" fill="#e6e04a"/><rect x="4" y="9" width="1" height="1" fill="#000000"/><rect x="6" y="9" width="2" height="1" fill="#000000"/><rect x="8" y="9" width="2" height="1" fill="#ffd8c0"/><rect x="10" y="9" width="4" height="1" fill="#000000"/><rect x="3" y="10" width="1" height="1" fill="#000000"/><rect x="4" y="10" width="2" height="1" fill="#e6e04a"/><rect x="7" y="10" width="1" height="1" fill="#000000"/><rect x="8" y="10" width="2" height="1" fill="#ffd8c0"/><rect x="10" y="10" width="2" height="1" fill="#000000"/><rect x="12" y="10" width="1" height="1" fill="#ffffff"/><rect x="13" y="10" width="1" height="1" fill="#000000"/><rect x="4" y="11" width="1" height="1" fill="#000000"/><rect x="5" y="11" width="1" height="1" fill="#e6e04a"/><rect x="6" y="11" width="1" height="1" fill="#000000"/><rect x="7" y="11" width="1" height="1" fill="#ffffff"/><rect x="8" y="11" width="4" height="1" fill="#4848e0"/><rect x="12" y="11" width="1" height="1" fill="#ffffff"/><rect x="13" y="11" width="2" height="1" fill="#000000"/><rect x="4" y="12" width="3" height="1" fill="#000000"/><rect x="7" y="12" width="4" height="1" fill="#4848e0"/><rect x="11" y="12" width="1" height="1" fill="#000000"/><rect x="12" y="12" width="2" height="1" fill="#ffffff"/><rect x="14" y="12" width="2" height="1" fill="#000000"/><rect x="5" y="13" width="2" height="1" fill="#000000"/><rect x="7" y="13" width="3" height="1" fill="#4848e0"/><rect x="10" y="13" width="1" height="1" fill="#ffffff"/><rect x="11" y="13" width="2" height="1" fill="#4848e0"/><rect x="13" y="13" width="1" height="1" fill="#ffffff"/><rect x="14" y="13" width="1" height="1" fill="#000000"/><rect x="6" y="14" width="2" height="1" fill="#000000"/><rect x="8" y="14" width="5" height="1" fill="#4848e0"/><rect x="13" y="14" width="1" height="1" fill="#000000"/><rect x="8" y="15" width="4" height="1" fill="#000000"/></svg><span class="t " style="left:480.5px;top:743.69px;font-size:11px;line-height:20px;color:#000;transform:scaleX(1.0);font-family:'DejaVu Sans','Liberation Sans',sans-serif;-webkit-text-stroke:0;">الشاشة الر...</span><div class="tb" style="left:560px;top:742px;width:100px;height:22px"></div><svg class="ic" style="left:564px;top:745px" width="16" height="16" viewBox="0 0 16 16" shape-rendering="crispEdges"><rect x="10" y="0" width="1" height="1" fill="#000000"/><rect x="2" y="1" width="2" height="1" fill="#000080"/><rect x="4" y="1" width="1" height="1" fill="#8c8cf0"/><rect x="5" y="1" width="3" height="1" fill="#000080"/><rect x="10" y="1" width="1" height="1" fill="#000000"/><rect x="11" y="1" width="1" height="1" fill="#4848e0"/><rect x="2" y="2" width="2" height="1" fill="#000080"/><rect x="4" y="2" width="1" height="1" fill="#ffffff"/><rect x="5" y="2" width="3" height="1" fill="#000080"/><rect x="9" y="2" width="1" height="1" fill="#000000"/><rect x="10" y="2" width="3" height="1" fill="#4848e0"/><rect x="2" y="3" width="6" height="1" fill="#000080"/><rect x="9" y="3" width="1" height="1" fill="#8c8cf0"/><rect x="10" y="3" width="3" height="1" fill="#4848e0"/><rect x="2" y="4" width="6" height="1" fill="#000080"/><rect x="9" y="4" width="4" height="1" fill="#4848e0"/><rect x="0" y="5" width="2" height="1" fill="#ffffa0"/><rect x="9" y="5" width="4" height="1" fill="#4848e0"/><rect x="13" y="5" width="1" height="1" fill="#000000"/><rect x="0" y="6" width="1" height="1" fill="#000000"/><rect x="1" y="6" width="2" height="1" fill="#e6e04a"/><rect x="3" y="6" width="1" height="1" fill="#000000"/><rect x="8" y="6" width="2" height="1" fill="#501010"/><rect x="10" y="6" width="3" height="1" fill="#4848e0"/><rect x="13" y="6" width="1" height="1" fill="#000000"/><rect x="0" y="7" width="1" height="1" fill="#000000"/><rect x="1" y="7" width="2" height="1" fill="#e6e04a"/><rect x="3" y="7" width="2" height="1" fill="#000000"/><rect x="7" y="7" width="1" height="1" fill="#000000"/><rect x="8" y="7" width="2" height="1" fill="#501010"/><rect x="10" y="7" width="1" height="1" fill="#000000"/><rect x="11" y="7" width="2" height="1" fill="#ffffa0"/><rect x="13" y="7" width="1" height="1" fill="#000000"/><rect x="1" y="8" width="1" height="1" fill="#000000"/><rect x="2" y="8" width="2" height="1" fill="#e6e04a"/><rect x="4" y="8" width="1" height="1" fill="#000000"/><rect x="6" y="8" width="1" height="1" fill="#000000"/><rect x="7" y="8" width="3" height="1" fill="#ffd8c0"/><rect x="10" y="8" width="1" height="1" fill="#000000"/><rect x="11" y="8" width="2" height="1" fill="#ffffa0"/><rect x="13" y="8" width="1" height="1" fill="#000000"/><rect x="1" y="9" width="2" height="1" fill="#000000"/><rect x="3" y="9" width="1" height="1" fill="#e6e04a"/><rect x="4" y="9" width="1" height="1" fill="#000000"/><rect x="6" y="9" width="2" height="1" fill="#000000"/><rect x="8" y="9" width="2" height="1" fill="#ffd8c0"/><rect x="10" y="9" width="4" height="1" fill="#000000"/><rect x="3" y="10" width="1" height="1" fill="#000000"/><rect x="4" y="10" width="2" height="1" fill="#e6e04a"/><rect x="7" y="10" width="1" height="1" fill="#000000"/><rect x="8" y="10" width="2" height="1" fill="#ffd8c0"/><rect x="10" y="10" width="2" height="1" fill="#000000"/><rect x="12" y="10" width="1" height="1" fill="#ffffff"/><rect x="13" y="10" width="1" height="1" fill="#000000"/><rect x="4" y="11" width="1" height="1" fill="#000000"/><rect x="5" y="11" width="1" height="1" fill="#e6e04a"/><rect x="6" y="11" width="1" height="1" fill="#000000"/><rect x="7" y="11" width="1" height="1" fill="#ffffff"/><rect x="8" y="11" width="4" height="1" fill="#4848e0"/><rect x="12" y="11" width="1" height="1" fill="#ffffff"/><rect x="13" y="11" width="2" height="1" fill="#000000"/><rect x="4" y="12" width="3" height="1" fill="#000000"/><rect x="7" y="12" width="4" height="1" fill="#4848e0"/><rect x="11" y="12" width="1" height="1" fill="#000000"/><rect x="12" y="12" width="2" height="1" fill="#ffffff"/><rect x="14" y="12" width="2" height="1" fill="#000000"/><rect x="5" y="13" width="2" height="1" fill="#000000"/><rect x="7" y="13" width="3" height="1" fill="#4848e0"/><rect x="10" y="13" width="1" height="1" fill="#ffffff"/><rect x="11" y="13" width="2" height="1" fill="#4848e0"/><rect x="13" y="13" width="1" height="1" fill="#ffffff"/><rect x="14" y="13" width="1" height="1" fill="#000000"/><rect x="6" y="14" width="2" height="1" fill="#000000"/><rect x="8" y="14" width="5" height="1" fill="#4848e0"/><rect x="13" y="14" width="1" height="1" fill="#000000"/><rect x="8" y="15" width="4" height="1" fill="#000000"/></svg><span class="t " style="left:583.5px;top:743.69px;font-size:11px;line-height:20px;color:#000;transform:scaleX(1.0);font-family:'DejaVu Sans','Liberation Sans',sans-serif;-webkit-text-stroke:0;">البيانات الأسا...</span><div class="tb" style="left:663px;top:742px;width:100px;height:22px"></div><svg class="ic" style="left:667px;top:745px" width="16" height="16" viewBox="0 0 16 16" shape-rendering="crispEdges"><rect x="10" y="0" width="1" height="1" fill="#000000"/><rect x="2" y="1" width="2" height="1" fill="#000080"/><rect x="4" y="1" width="1" height="1" fill="#8c8cf0"/><rect x="5" y="1" width="3" height="1" fill="#000080"/><rect x="10" y="1" width="1" height="1" fill="#000000"/><rect x="11" y="1" width="1" height="1" fill="#4848e0"/><rect x="2" y="2" width="2" height="1" fill="#000080"/><rect x="4" y="2" width="1" height="1" fill="#ffffff"/><rect x="5" y="2" width="3" height="1" fill="#000080"/><rect x="9" y="2" width="1" height="1" fill="#000000"/><rect x="10" y="2" width="3" height="1" fill="#4848e0"/><rect x="2" y="3" width="6" height="1" fill="#000080"/><rect x="9" y="3" width="1" height="1" fill="#8c8cf0"/><rect x="10" y="3" width="3" height="1" fill="#4848e0"/><rect x="2" y="4" width="6" height="1" fill="#000080"/><rect x="9" y="4" width="4" height="1" fill="#4848e0"/><rect x="0" y="5" width="2" height="1" fill="#ffffa0"/><rect x="9" y="5" width="4" height="1" fill="#4848e0"/><rect x="13" y="5" width="1" height="1" fill="#000000"/><rect x="0" y="6" width="1" height="1" fill="#000000"/><rect x="1" y="6" width="2" height="1" fill="#e6e04a"/><rect x="3" y="6" width="1" height="1" fill="#000000"/><rect x="8" y="6" width="2" height="1" fill="#501010"/><rect x="10" y="6" width="3" height="1" fill="#4848e0"/><rect x="13" y="6" width="1" height="1" fill="#000000"/><rect x="0" y="7" width="1" height="1" fill="#000000"/><rect x="1" y="7" width="2" height="1" fill="#e6e04a"/><rect x="3" y="7" width="2" height="1" fill="#000000"/><rect x="7" y="7" width="1" height="1" fill="#000000"/><rect x="8" y="7" width="2" height="1" fill="#501010"/><rect x="10" y="7" width="1" height="1" fill="#000000"/><rect x="11" y="7" width="2" height="1" fill="#ffffa0"/><rect x="13" y="7" width="1" height="1" fill="#000000"/><rect x="1" y="8" width="1" height="1" fill="#000000"/><rect x="2" y="8" width="2" height="1" fill="#e6e04a"/><rect x="4" y="8" width="1" height="1" fill="#000000"/><rect x="6" y="8" width="1" height="1" fill="#000000"/><rect x="7" y="8" width="3" height="1" fill="#ffd8c0"/><rect x="10" y="8" width="1" height="1" fill="#000000"/><rect x="11" y="8" width="2" height="1" fill="#ffffa0"/><rect x="13" y="8" width="1" height="1" fill="#000000"/><rect x="1" y="9" width="2" height="1" fill="#000000"/><rect x="3" y="9" width="1" height="1" fill="#e6e04a"/><rect x="4" y="9" width="1" height="1" fill="#000000"/><rect x="6" y="9" width="2" height="1" fill="#000000"/><rect x="8" y="9" width="2" height="1" fill="#ffd8c0"/><rect x="10" y="9" width="4" height="1" fill="#000000"/><rect x="3" y="10" width="1" height="1" fill="#000000"/><rect x="4" y="10" width="2" height="1" fill="#e6e04a"/><rect x="7" y="10" width="1" height="1" fill="#000000"/><rect x="8" y="10" width="2" height="1" fill="#ffd8c0"/><rect x="10" y="10" width="2" height="1" fill="#000000"/><rect x="12" y="10" width="1" height="1" fill="#ffffff"/><rect x="13" y="10" width="1" height="1" fill="#000000"/><rect x="4" y="11" width="1" height="1" fill="#000000"/><rect x="5" y="11" width="1" height="1" fill="#e6e04a"/><rect x="6" y="11" width="1" height="1" fill="#000000"/><rect x="7" y="11" width="1" height="1" fill="#ffffff"/><rect x="8" y="11" width="4" height="1" fill="#4848e0"/><rect x="12" y="11" width="1" height="1" fill="#ffffff"/><rect x="13" y="11" width="2" height="1" fill="#000000"/><rect x="4" y="12" width="3" height="1" fill="#000000"/><rect x="7" y="12" width="4" height="1" fill="#4848e0"/><rect x="11" y="12" width="1" height="1" fill="#000000"/><rect x="12" y="12" width="2" height="1" fill="#ffffff"/><rect x="14" y="12" width="2" height="1" fill="#000000"/><rect x="5" y="13" width="2" height="1" fill="#000000"/><rect x="7" y="13" width="3" height="1" fill="#4848e0"/><rect x="10" y="13" width="1" height="1" fill="#ffffff"/><rect x="11" y="13" width="2" height="1" fill="#4848e0"/><rect x="13" y="13" width="1" height="1" fill="#ffffff"/><rect x="14" y="13" width="1" height="1" fill="#000000"/><rect x="6" y="14" width="2" height="1" fill="#000000"/><rect x="8" y="14" width="5" height="1" fill="#4848e0"/><rect x="13" y="14" width="1" height="1" fill="#000000"/><rect x="8" y="15" width="4" height="1" fill="#000000"/></svg><span class="t " style="left:686.5px;top:742.62px;font-size:11.5px;line-height:20px;color:#000;transform:scaleX(0.94);">Reports</span><div style="left:766px;top:742px;width:100px;height:22px;background-color:#d4d0c8;background-image:conic-gradient(#fff 25%,#d4d0c8 0 50%,#fff 0 75%,#d4d0c8 0);background-size:2px 2px;box-shadow:inset -1px -1px 0 #fff,inset 1px 1px 0 #404040,inset -2px -2px 0 #d4d0c8,inset 2px 2px 0 #808080"></div><svg class="ic" style="left:771px;top:746px" width="16" height="16" viewBox="0 0 16 16" shape-rendering="crispEdges"><rect x="10" y="0" width="1" height="1" fill="#000000"/><rect x="2" y="1" width="2" height="1" fill="#000080"/><rect x="4" y="1" width="1" height="1" fill="#8c8cf0"/><rect x="5" y="1" width="3" height="1" fill="#000080"/><rect x="10" y="1" width="1" height="1" fill="#000000"/><rect x="11" y="1" width="1" height="1" fill="#4848e0"/><rect x="2" y="2" width="2" height="1" fill="#000080"/><rect x="4" y="2" width="1" height="1" fill="#ffffff"/><rect x="5" y="2" width="3" height="1" fill="#000080"/><rect x="9" y="2" width="1" height="1" fill="#000000"/><rect x="10" y="2" width="3" height="1" fill="#4848e0"/><rect x="2" y="3" width="6" height="1" fill="#000080"/><rect x="9" y="3" width="1" height="1" fill="#8c8cf0"/><rect x="10" y="3" width="3" height="1" fill="#4848e0"/><rect x="2" y="4" width="6" height="1" fill="#000080"/><rect x="9" y="4" width="4" height="1" fill="#4848e0"/><rect x="0" y="5" width="2" height="1" fill="#ffffa0"/><rect x="9" y="5" width="4" height="1" fill="#4848e0"/><rect x="13" y="5" width="1" height="1" fill="#000000"/><rect x="0" y="6" width="1" height="1" fill="#000000"/><rect x="1" y="6" width="2" height="1" fill="#e6e04a"/><rect x="3" y="6" width="1" height="1" fill="#000000"/><rect x="8" y="6" width="2" height="1" fill="#501010"/><rect x="10" y="6" width="3" height="1" fill="#4848e0"/><rect x="13" y="6" width="1" height="1" fill="#000000"/><rect x="0" y="7" width="1" height="1" fill="#000000"/><rect x="1" y="7" width="2" height="1" fill="#e6e04a"/><rect x="3" y="7" width="2" height="1" fill="#000000"/><rect x="7" y="7" width="1" height="1" fill="#000000"/><rect x="8" y="7" width="2" height="1" fill="#501010"/><rect x="10" y="7" width="1" height="1" fill="#000000"/><rect x="11" y="7" width="2" height="1" fill="#ffffa0"/><rect x="13" y="7" width="1" height="1" fill="#000000"/><rect x="1" y="8" width="1" height="1" fill="#000000"/><rect x="2" y="8" width="2" height="1" fill="#e6e04a"/><rect x="4" y="8" width="1" height="1" fill="#000000"/><rect x="6" y="8" width="1" height="1" fill="#000000"/><rect x="7" y="8" width="3" height="1" fill="#ffd8c0"/><rect x="10" y="8" width="1" height="1" fill="#000000"/><rect x="11" y="8" width="2" height="1" fill="#ffffa0"/><rect x="13" y="8" width="1" height="1" fill="#000000"/><rect x="1" y="9" width="2" height="1" fill="#000000"/><rect x="3" y="9" width="1" height="1" fill="#e6e04a"/><rect x="4" y="9" width="1" height="1" fill="#000000"/><rect x="6" y="9" width="2" height="1" fill="#000000"/><rect x="8" y="9" width="2" height="1" fill="#ffd8c0"/><rect x="10" y="9" width="4" height="1" fill="#000000"/><rect x="3" y="10" width="1" height="1" fill="#000000"/><rect x="4" y="10" width="2" height="1" fill="#e6e04a"/><rect x="7" y="10" width="1" height="1" fill="#000000"/><rect x="8" y="10" width="2" height="1" fill="#ffd8c0"/><rect x="10" y="10" width="2" height="1" fill="#000000"/><rect x="12" y="10" width="1" height="1" fill="#ffffff"/><rect x="13" y="10" width="1" height="1" fill="#000000"/><rect x="4" y="11" width="1" height="1" fill="#000000"/><rect x="5" y="11" width="1" height="1" fill="#e6e04a"/><rect x="6" y="11" width="1" height="1" fill="#000000"/><rect x="7" y="11" width="1" height="1" fill="#ffffff"/><rect x="8" y="11" width="4" height="1" fill="#4848e0"/><rect x="12" y="11" width="1" height="1" fill="#ffffff"/><rect x="13" y="11" width="2" height="1" fill="#000000"/><rect x="4" y="12" width="3" height="1" fill="#000000"/><rect x="7" y="12" width="4" height="1" fill="#4848e0"/><rect x="11" y="12" width="1" height="1" fill="#000000"/><rect x="12" y="12" width="2" height="1" fill="#ffffff"/><rect x="14" y="12" width="2" height="1" fill="#000000"/><rect x="5" y="13" width="2" height="1" fill="#000000"/><rect x="7" y="13" width="3" height="1" fill="#4848e0"/><rect x="10" y="13" width="1" height="1" fill="#ffffff"/><rect x="11" y="13" width="2" height="1" fill="#4848e0"/><rect x="13" y="13" width="1" height="1" fill="#ffffff"/><rect x="14" y="13" width="1" height="1" fill="#000000"/><rect x="6" y="14" width="2" height="1" fill="#000000"/><rect x="8" y="14" width="5" height="1" fill="#4848e0"/><rect x="13" y="14" width="1" height="1" fill="#000000"/><rect x="8" y="15" width="4" height="1" fill="#000000"/></svg><span class="t " style="left:790.5px;top:743.69px;font-size:11px;line-height:20px;color:#000;transform:scaleX(1.06);font-weight:bold;">Database L...</span><div style="left:877px;top:746px;width:12px;height:16px;background:#0a246a;overflow:hidden"></div><div style="left:877px;top:746px;width:12px;height:16px;overflow:hidden"><span class="t " style="left:1px;top:-1.81px;font-size:11px;line-height:20px;color:#fff;transform:scaleX(1.0);">EN</span></div><div class="pane" style="left:893px;top:742px;width:129px;height:24px"></div><span class="t " style="left:898px;top:744.00px;font-size:13px;line-height:20px;color:#000;transform:scaleX(1.05);font-weight:bold;">«</span><svg class="ic" style="left:910.5px;top:746px" width="16" height="16" viewBox="0 0 16 16"><rect x="6.8" y="0.4" width="7" height="6.2" fill="#3e3e8c" stroke="#32327a" stroke-width="0.6"/><path d="M13.2 0.6v6" stroke="#7878c0" stroke-width="0.9"/><ellipse cx="10.4" cy="9" rx="3.2" ry="1.8" fill="#8c8cd0"/><ellipse cx="10.4" cy="9.8" rx="2.4" ry="1" fill="#c8c8ec"/><rect x="1.6" y="4" width="6.6" height="6" fill="#3e3e8c" stroke="#32327a" stroke-width="0.6"/><path d="M7.8 4.2v5.8" stroke="#7878c0" stroke-width="0.9"/><ellipse cx="4.6" cy="12.4" rx="3.4" ry="2" fill="#9898d8"/><ellipse cx="4.4" cy="13.2" rx="2.6" ry="1.2" fill="#e4e4f8"/></svg><svg class="ic" style="left:929px;top:746px" width="17" height="16" viewBox="0 0 17 16"><circle cx="4.5" cy="3.1" r="1.8" fill="#b4d4f8"/><circle cx="10.6" cy="2.9" r="2.8" fill="#2a8488"/><circle cx="9.9" cy="2.2" r="1.1" fill="#78c4a8"/><path d="M0.1 8.2C1.5 6.5 3.2 6.3 4.2 6.6L5.8 15C3 13.5 1 11 0.1 8.2Z" fill="#2a86c8"/><path d="M3.2 5.9C4.6 5.1 5.8 5.5 6.4 6.4L6.2 10.4 4 8.8Z" fill="#f8f8f4"/><path d="M6.3 6.3L10.2 5.9V13.6L7.6 14.4 6 10Z" fill="#e8642a"/><path d="M10.1 5.8C13 5.4 15.5 7.6 16 10C15 12.4 12.8 13.6 10.1 13.6Z" fill="#2858a8"/><path d="M3.7 12.4L6.4 12.8V15.6C5 15.2 4.2 14 3.7 12.4Z" fill="#48a838"/><path d="M6.8 12.4h2v1.8h-2z" fill="#f0c020"/><circle cx="12.2" cy="12" r="4" fill="#d83820" stroke="#f0a090" stroke-width="0.6"/><path d="M10.4 10.2l3.6 3.6M14 10.2l-3.6 3.6" stroke="#fff" stroke-width="1.6"/></svg><svg class="ic" style="left:946.5px;top:746px" width="17" height="16" viewBox="0 0 17 16"><rect x="1.5" y="0.5" width="8.4" height="14" fill="#ececec" stroke="#585858"/><path d="M2.5 1.6h6.4M2.5 4.4h6.4" stroke="#707070" stroke-width="1.3"/><path d="M2.5 7.5h6" stroke="#a0a0a0"/><rect x="3" y="12" width="1.6" height="1.4" fill="#c03020"/><circle cx="11.2" cy="10.4" r="4.6" fill="#fff" stroke="#101010" stroke-width="1"/><path d="M9.6 7.6l4.4 2.8-4.4 2.8z" fill="#189018"/></svg><span class="t " style="left:969.6px;top:744.02px;font-size:11.5px;line-height:20px;color:#000;transform:scaleX(0.97);">10:58 </span><span class="t " style="left:1001px;top:744.19px;font-size:11px;line-height:20px;color:#000;transform:scaleX(1.0);font-family:'DejaVu Sans','Liberation Sans',sans-serif;-webkit-text-stroke:0;">ص</span>
</body></html>
